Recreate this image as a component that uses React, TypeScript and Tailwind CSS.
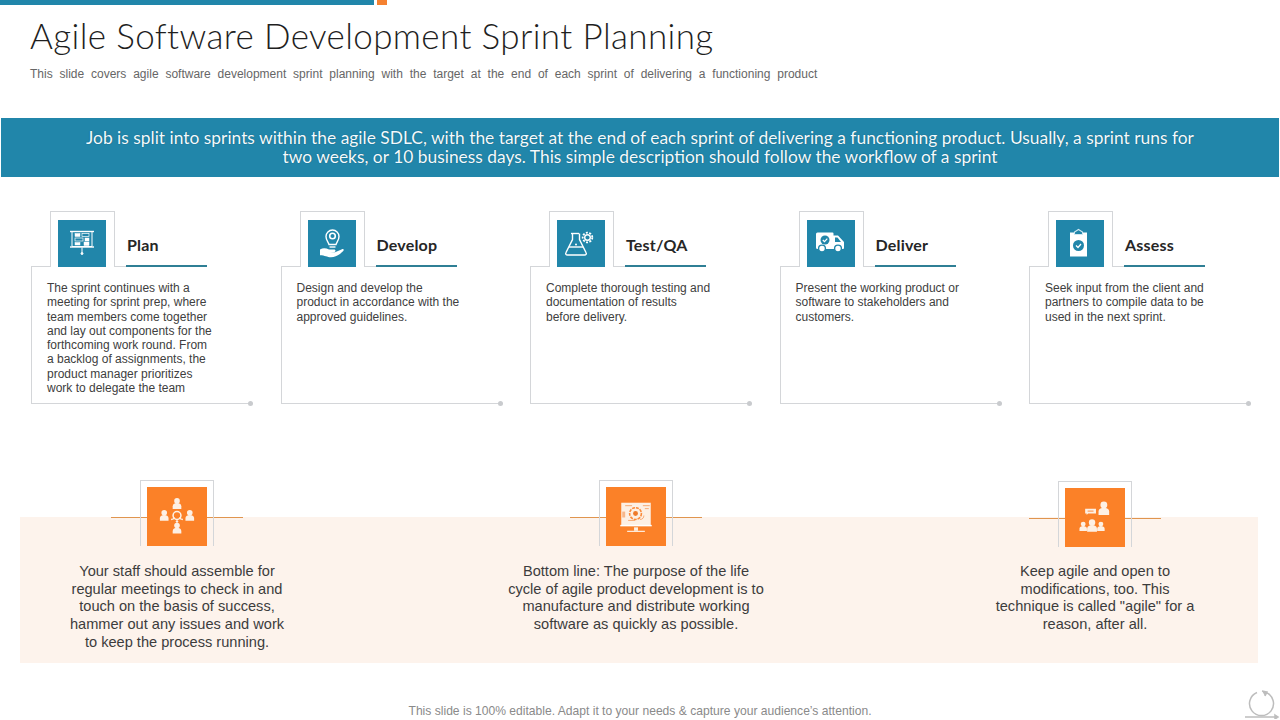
import React from 'react';

const ARIAL = 'font-["Liberation_Sans",Arial,sans-serif]';
const GOTHIC = 'font-["Lato","Open_Sans",sans-serif]';

function PlanIcon() {
  return (
    <svg viewBox="0 0 48 46" className="w-full h-full" fill="none" stroke="#fff">
      <path d="M12 11h24" strokeWidth="1.4" />
      <path d="M14 11v15h20V11" strokeWidth="1" />
      <path d="M12 26.500h24" strokeWidth="1.4" />
      <path d="M24 27v5" strokeWidth="1" />
      <circle cx="24" cy="33" r="1" fill="#fff" />
      <rect x="17" y="13" width="5" height="3" fill="#fff" strokeWidth="0.5" />
      <rect x="24" y="13" width="7" height="3" strokeWidth="0.7" />
      <rect x="17" y="17.500" width="8" height="3" strokeWidth="0.7" />
      <rect x="27" y="17.500" width="4" height="3" fill="#fff" strokeWidth="0.5" />
      <rect x="17" y="22" width="5" height="2.500" fill="#fff" strokeWidth="0.5" />
      <rect x="26" y="21.500" width="5" height="3.500" fill="#fff" strokeWidth="0.5" />
    </svg>
  );
}

function DevelopIcon() {
  return (
    <svg viewBox="0 0 48 46" className="w-full h-full" fill="none" stroke="#fff">
      <path d="M21 24c-.5-2.500-3-4-3-8a6.500 6.500 0 0 1 13 0c0 4-2.500 5.500-3 8z" strokeWidth="1.400" />
      <circle cx="24.500" cy="15.500" r="2.800" strokeWidth="1.600" />
      <path d="M21.500 26.500h6" strokeWidth="1.400" />
      <path d="M12 29c3-2 6-1.500 9 0h5c2 0 2 2.500 0 2.500h-4l5 .2 7-3c1.500-.5 2.500 1 1 2-3 3-7 6-12 6-4 0-6-2-11-2z" fill="#fff" stroke="none" />
    </svg>
  );
}

function TestIcon() {
  return (
    <svg viewBox="0 0 48 46" className="w-full h-full" fill="none" stroke="#fff" strokeWidth="1.400">
      <path d="M14 13h8" />
      <path d="M15.500 13v6L9 32c-.8 1.500 0 2.500 1.500 2.500h17c1.500 0 2.300-1 1.500-2.500l-6.500-13v-6" />
      <path d="M12 26.500h14" />
      <circle cx="19" cy="24" r="1" fill="#fff" stroke="none" />
      <circle cx="30.500" cy="17" r="2.800" />
      <circle cx="30.500" cy="17" r="4.800" strokeDasharray="2 1.400" strokeWidth="1.800" />
    </svg>
  );
}

function DeliverIcon() {
  return (
    <svg viewBox="0 0 48 46" className="w-full h-full">
      <path d="M9 13.500a1.500 1.500 0 0 1 1.500-1.500H25.500a1 1 0 0 1 1 1v2h4.500l6 6.500v6a1 1 0 0 1-1 1H10.500a1.500 1.500 0 0 1-1.500-1.500z" fill="#fff" />
      <path d="M28 17h2.500l3.500 4.500h-6z" fill="#2186aa" />
      <circle cx="18" cy="19.500" r="4.500" fill="#2186aa" />
      <path d="M15.800 19.500l1.700 1.700 2.800-3" fill="none" stroke="#fff" strokeWidth="1.200" />
      <circle cx="15" cy="28" r="3.400" fill="#fff" stroke="#2186aa" strokeWidth="1.400" />
      <circle cx="31" cy="28" r="3.400" fill="#fff" stroke="#2186aa" strokeWidth="1.400" />
    </svg>
  );
}

function AssessIcon() {
  return (
    <svg viewBox="0 0 48 46" className="w-full h-full">
      <rect x="14" y="12" width="17" height="24" fill="#fff" />
      <path d="M18.500 14v-2.500l4-2.500 4 2.500V14z" fill="#2186aa" stroke="#cfe8f2" strokeWidth="1.100" />
      <circle cx="22.500" cy="25" r="5.500" fill="#2186aa" />
      <path d="M20 25l2 2 3-3.500" fill="none" stroke="#fff" strokeWidth="1.200" />
    </svg>
  );
}

function Person({ x, y, s = 1 }: { x: number; y: number; s?: number }) {
  return (
    <g transform={`translate(${x} ${y}) scale(${s})`}>
      <circle cx="0" cy="-3.500" r="2.600" />
      <path d="M-4 4v-2.500c0-2 2-3 4-3s4 1 4 3V4z" />
    </g>
  );
}

function StaffIcon() {
  return (
    <svg viewBox="0 0 60 60" className="w-full h-full" fill="#fdf0e4">
      <Person x={30} y={18} s={1.100} />
      <Person x={17} y={30} s={1.100} />
      <Person x={43} y={30} s={1.100} />
      <Person x={30} y={43} s={1.100} />
      <circle cx="30" cy="29" r="4" fill="none" stroke="#fdf0e4" strokeWidth="1.600" />
      <path d="M24 33c2 0 3-1 3.500-2M36 33c-2 0-3-1-3.500-2" fill="none" stroke="#fdf0e4" strokeWidth="1.400" />
      <circle cx="30" cy="35" r="1.300" />
    </svg>
  );
}

function MonitorIcon() {
  return (
    <svg viewBox="0 0 60 60" className="w-full h-full">
      <rect x="15" y="16" width="30" height="23" fill="#fdf0e4" />
      <rect x="14" y="38.500" width="32" height="1.500" fill="#fff" />
      <rect x="28" y="41" width="4" height="3.500" fill="#fdf0e4" />
      <rect x="21" y="44.500" width="18" height="1.200" fill="#fdf0e4" />
      <circle cx="29.500" cy="27" r="6" fill="none" stroke="#fb8a3a" strokeWidth="1.600" strokeDasharray="3 1" />
      <circle cx="29.500" cy="27" r="2.500" fill="#ee7a2a" />
      <path d="M19 19h7M37 19h7M39 22h4M22 34h7M34 33c3 0 4-2 4-4" fill="none" stroke="#f7a871" strokeWidth="1" />
      <rect x="16" y="25" width="3" height="6" fill="#f7b78a" />
    </svg>
  );
}

function TeamIcon() {
  return (
    <svg viewBox="0 0 60 60" className="w-full h-full" fill="#fdf0e4">
      <Person x={39} y={22} s={1.350} />
      <Person x={18} y={40} s={0.950} />
      <Person x={27} y={39.500} s={1.250} />
      <Person x={36} y={40} s={0.950} />
      <path d="M20 21h11v5h-8l-1.500 1.500V26H20z" />
      <path d="M22.500 23.500h6" stroke="#fb8a3a" strokeWidth="1" />
    </svg>
  );
}

const STEPS = [
  {
    title: 'Plan',
    icon: <PlanIcon />,
    text: ['The sprint continues with a', 'meeting for sprint prep, where', 'team members come together', 'and lay out components for the', 'forthcoming work round. From', 'a backlog of assignments, the', 'product manager prioritizes', 'work to delegate the team'],
  },
  { title: 'Develop', icon: <DevelopIcon />, text: ['Design and develop the', 'product in accordance with the', 'approved guidelines.'] },
  { title: 'Test/QA', icon: <TestIcon />, text: ['Complete thorough testing and', 'documentation of results', 'before delivery.'] },
  { title: 'Deliver', icon: <DeliverIcon />, text: ['Present the working product or', 'software to stakeholders and', 'customers.'] },
  { title: 'Assess', icon: <AssessIcon />, text: ['Seek input from the client and', 'partners to compile data to be', 'used in the next sprint.'] },
];

const NOTES = [
  { icon: <StaffIcon />, head: '-mt-[37px]', body: 'pt-[17px]', text: ['Your staff should assemble for', 'regular meetings to check in and', 'touch on the basis of success,', 'hammer out any issues and work', 'to keep the process running.'] },
  { icon: <MonitorIcon />, head: '-mt-[37px]', body: 'pt-[17px]', text: ['Bottom line: The purpose of the life', 'cycle of agile product development is to', 'manufacture and distribute working', 'software as quickly as possible.'] },
  { icon: <TeamIcon />, head: '-mt-[36px]', body: 'pt-[16px]', text: ['Keep agile and open to', 'modifications, too. This', 'technique is called "agile" for a', 'reason, after all.'] },
];

function StepCard({ step }: { step: (typeof STEPS)[number] }) {
  return (
    <div className="w-[222px]">
      <div className="flex h-[56px] items-end">
        <div className="w-[19px] border-b border-[#d4d6d9]" />
        <div className="w-[65px] h-full border-t border-x border-[#d4d6d9] pt-2 px-[7px]">
          <div className="w-[48px] h-[47px] bg-[#2186aa]">{step.icon}</div>
        </div>
        <div className="w-[11px] border-b border-[#d4d6d9]" />
        <div className={`w-[81px] h-[33px] border-b-[2px] border-[#2f7f95] pl-px text-[16px] leading-[22px] font-bold tracking-[0.2px] text-[#262626] ${GOTHIC}`}>
          {step.title}
        </div>
      </div>
      <div className="relative h-[137px] border-l border-b border-[#d4d6d9] pl-[15px] pt-[14px]">
        {step.text.map(line => (
          <p key={line} className={`text-[12px] leading-[14.300px] text-[#404040] ${ARIAL}`}>{line}</p>
        ))}
        <div className="absolute right-0 -bottom-[3px] w-[5px] h-[5px] rounded-full bg-[#c9cbce]" />
      </div>
    </div>
  );
}

function NoteColumn({ note }: { note: (typeof NOTES)[number] }) {
  return (
    <div className={`w-[300px] flex flex-col items-center ${note.head}`}>
      <div className="relative w-[132px] h-[66px] flex justify-center">
        <div className="absolute left-0 right-0 top-[37px] border-t border-[#e0954f]" />
        <div className="relative w-[74px] h-[66px] border-t border-x border-[#d4d6d9] px-[6px] pt-[6px]">
          <div className="w-[60px] h-[59px] bg-[#fb8128]">{note.icon}</div>
        </div>
      </div>
      <div className={note.body}>
        {note.text.map(line => (
          <p key={line} className={`text-center text-[14.600px] leading-[17.700px] text-[#3c3c3c] ${ARIAL}`}>{line}</p>
        ))}
      </div>
    </div>
  );
}

export default function App() {
  return (
    <div className="relative w-[1280px] h-[720px] overflow-hidden bg-white">
      <div className="flex h-[5px]">
        <div className="w-[374px] bg-[#2186aa]" />
        <div className="w-[10px] ml-[3px] bg-[#f58130]" />
      </div>

      <h1 className={`ml-[30px] mt-[8px] text-[35px] leading-[44px] font-light tracking-[0.37px] text-[#1f1f1f] ${GOTHIC}`}>
        Agile Software Development Sprint Planning
      </h1>
      <p className={`ml-[30px] mt-[10px] text-[12px] leading-[14px] text-[#666666] [word-spacing:3.500px] ${ARIAL}`}>
        This slide covers agile software development sprint planning with the target at the end of each sprint of delivering a functioning product
      </p>

      <div className={`mx-px mt-[37px] h-[59px] bg-[#2186aa] pt-[10px] text-center text-[17.400px] leading-[19px] text-[#f2fbff] [text-shadow:0_0_1px_#0b4a63] ${GOTHIC}`}>
        Job is split into sprints within the agile SDLC, with the target at the end of each sprint of delivering a functioning product. Usually, a sprint runs for
        <br />
        two weeks, or 10 business days. This simple description should follow the workflow of a sprint
      </div>

      <div className="mt-[34px] ml-[31px] flex gap-[27.500px]">
        {STEPS.map(step => <StepCard key={step.title} step={step} />)}
      </div>

      <div className="mt-[113px] ml-5 w-[1238px] h-[146px] bg-[#fdf3ec] flex justify-between pl-[7px] pr-[13px]">
        {NOTES.map(note => <NoteColumn key={note.text[0]} note={note} />)}
      </div>

      <p className={`mt-[41px] text-center text-[12.100px] leading-[14px] text-[#8a8a8a] ${ARIAL}`}>
        This slide is 100% editable. Adapt it to your needs &amp; capture your audience’s attention.
      </p>

      <svg viewBox="0 0 36 30" className="absolute left-[1244px] top-[689px] w-[36px] h-[30px]" fill="none" stroke="#bdbdbd" strokeWidth="1.500">
        <path d="M22 3.500a12 12 0 1 1-9 0" />
        <path d="M18 2l5 1-2 4" fill="#bdbdbd" />
        <path d="M1 28h32" />
        <path d="M31 26l3 2-3 2z" fill="#bdbdbd" />
      </svg>
    </div>
  );
}
